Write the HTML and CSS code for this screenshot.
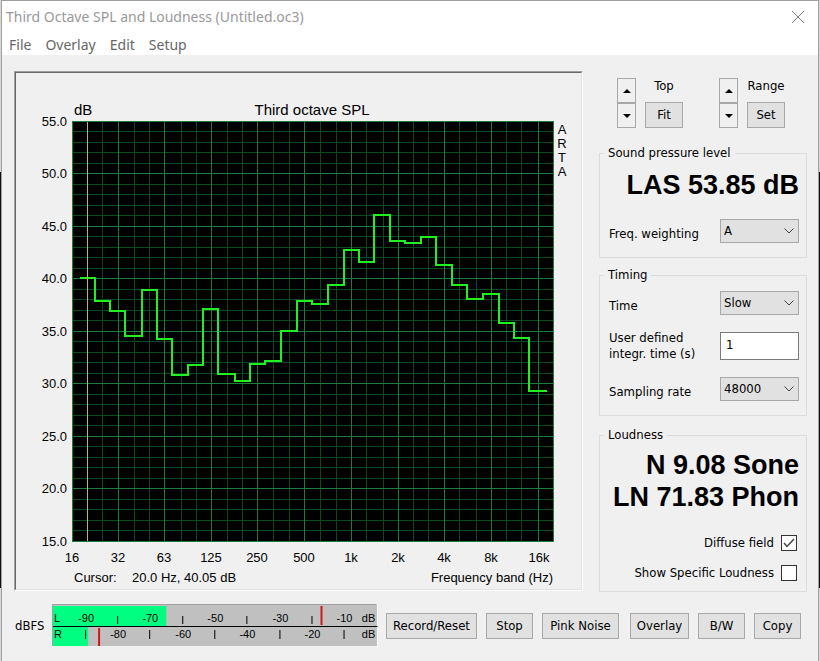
FILE: index.html
```
<!DOCTYPE html>
<html lang="en">
<head>
<meta charset="utf-8">
<title>Third Octave SPL and Loudness (Untitled.oc3)</title>
<link rel="stylesheet" href="styles.css">
</head>
<body>
<div class="window">
  <header class="titlebar">
    <h1 class="title">Third Octave SPL and Loudness (Untitled.oc3)</h1>
    <button class="close" aria-label="Close">
      <svg width="14" height="14" viewBox="0 0 14 14"><path d="M1 1L13 13M13 1L1 13" fill="none" stroke="#808080"/></svg>
    </button>
  </header>
  <nav class="menu">
    <a href="#">File</a>
    <a href="#">Overlay</a>
    <a href="#">Edit</a>
    <a href="#">Setup</a>
  </nav>
  <main class="content">
    <section class="chart">
      <svg class="plot" viewBox="16 73 565 516">
        <rect x="72" y="121" width="482" height="421" fill="#000"/>
        <g class="grid" id="grid"></g>
        <path class="curve" d="M80 278H95V301H110V311H125V336H142V290H157V339H172V375H188V365H203V309H218V374H235V381H250V364H265V361H281V331H297V301H312V304H328V285H344V250H359V262H374V215H390V241H405V243H421V237H436V265H452V285H467V299H483V294H499V323H514V338H529V391H547"/>
        <path class="cursor" d="M87.500 122V541"/>
        <text class="heading" x="74" y="115">dB</text>
        <text class="heading middle" x="312" y="115">Third octave SPL</text>
        <g class="end">
          <text x="67" y="126">55.0</text>
          <text x="67" y="178">50.0</text>
          <text x="67" y="231">45.0</text>
          <text x="67" y="283">40.0</text>
          <text x="67" y="336">35.0</text>
          <text x="67" y="388">30.0</text>
          <text x="67" y="441">25.0</text>
          <text x="67" y="493">20.0</text>
          <text x="67" y="546">15.0</text>
        </g>
        <g class="middle">
          <text x="72" y="562">16</text>
          <text x="118" y="562">32</text>
          <text x="164" y="562">63</text>
          <text x="211" y="562">125</text>
          <text x="257" y="562">250</text>
          <text x="304" y="562">500</text>
          <text x="351" y="562">1k</text>
          <text x="398" y="562">2k</text>
          <text x="444" y="562">4k</text>
          <text x="491" y="562">8k</text>
          <text x="539" y="562">16k</text>
          <text x="562" y="134">A</text>
          <text x="562" y="148">R</text>
          <text x="562" y="162">T</text>
          <text x="562" y="176">A</text>
        </g>
        <text x="74" y="582">Cursor:</text>
        <text x="132" y="582">20.0 Hz, 40.05 dB</text>
        <text class="end" x="553" y="582">Frequency band (Hz)</text>
      </svg>
    </section>
    <aside class="side">
      <div class="scales">
        <div class="scale">
          <div class="spinner">
            <button aria-label="Top up"><svg width="8" height="4" viewBox="0 0 8 4"><path d="M0 4L4 0L8 4Z"/></svg></button>
            <button aria-label="Top down"><svg width="8" height="4" viewBox="0 0 8 4"><path d="M0 0L4 4L8 0Z"/></svg></button>
          </div>
          <div class="scale-set"><span>Top</span><button class="btn">Fit</button></div>
        </div>
        <div class="scale">
          <div class="spinner">
            <button aria-label="Range up"><svg width="8" height="4" viewBox="0 0 8 4"><path d="M0 4L4 0L8 4Z"/></svg></button>
            <button aria-label="Range down"><svg width="8" height="4" viewBox="0 0 8 4"><path d="M0 0L4 4L8 0Z"/></svg></button>
          </div>
          <div class="scale-set"><span>Range</span><button class="btn">Set</button></div>
        </div>
      </div>

      <fieldset class="group level">
        <legend>Sound pressure level</legend>
        <output class="reading">LAS 53.85 dB</output>
        <div class="row pick">
          <label for="weighting">Freq. weighting</label>
          <span class="drop"><select id="weighting"><option>A</option></select>
            <svg width="10" height="6" viewBox="0 0 10 6"><path d="M.5 .5L5 5L9.500 .5" fill="none" stroke="#444"/></svg></span>
        </div>
      </fieldset>

      <fieldset class="group timing">
        <legend>Timing</legend>
        <div class="row pick">
          <label for="time">Time</label>
          <span class="drop"><select id="time"><option>Slow</option></select>
            <svg width="10" height="6" viewBox="0 0 10 6"><path d="M.5 .5L5 5L9.500 .5" fill="none" stroke="#444"/></svg></span>
        </div>
        <div class="row">
          <label for="integr">User defined<br>integr. time (s)</label>
          <input id="integr" class="field" type="text" value="1">
        </div>
        <div class="row pick">
          <label for="rate">Sampling rate</label>
          <span class="drop"><select id="rate"><option>48000</option></select>
            <svg width="10" height="6" viewBox="0 0 10 6"><path d="M.5 .5L5 5L9.500 .5" fill="none" stroke="#444"/></svg></span>
        </div>
      </fieldset>

      <fieldset class="group loudness">
        <legend>Loudness</legend>
        <output class="reading">N 9.08 Sone</output>
        <output class="reading">LN 71.83 Phon</output>
        <div class="checks">
          <label class="check">Diffuse field
            <span class="tick"><input type="checkbox" checked>
              <svg width="12" height="10" viewBox="0 0 12 10"><path d="M1 5L4 8.500L11 1" fill="none" stroke="#444" stroke-width="1.500"/></svg></span></label>
          <label class="check">Show Specific Loudness
            <span class="tick"><input type="checkbox"></span></label>
        </div>
      </fieldset>
    </aside>
  </main>
  <footer class="bottom">
    <span>dBFS</span>
    <svg class="meter" viewBox="53 605 325 43">
      <rect x="53" y="605" width="325" height="43" fill="#fff"/>
      <rect x="53" y="605" width="324" height="42" fill="#a0a0a0"/>
      <rect x="54" y="606" width="323" height="41" fill="#c0c0c0"/>
      <rect x="54" y="607" width="113" height="20" fill="#00ff80"/>
      <rect x="54" y="628" width="35" height="19" fill="#00ff80"/>
      <path d="M54 627.500H378M118.500 617V625M183.500 617V625M247.500 617V625M312.500 617V625M86.500 631V640M150.500 631V640M215.500 631V640M280.500 631V640M344.500 631V640" stroke="#000"/>
      <path d="M322 607V626M100 629V647" stroke="#d01818" stroke-width="2"/>
      <g class="middle">
        <text x="58" y="623">L</text>
        <text x="87" y="623">-90</text>
        <text x="151" y="623">-70</text>
        <text x="216" y="623">-50</text>
        <text x="281" y="623">-30</text>
        <text x="345" y="623">-10</text>
        <text x="369" y="623">dB</text>
        <text x="59" y="639">R</text>
        <text x="119" y="639">-80</text>
        <text x="184" y="639">-60</text>
        <text x="248" y="639">-40</text>
        <text x="313" y="639">-20</text>
        <text x="369" y="639">dB</text>
      </g>
    </svg>
    <div class="actions">
      <div class="action-set">
        <button class="btn widest">Record/Reset</button>
        <button class="btn">Stop</button>
        <button class="btn wider">Pink Noise</button>
      </div>
      <div class="action-set">
        <button class="btn wide">Overlay</button>
        <button class="btn">B/W</button>
        <button class="btn">Copy</button>
      </div>
    </div>
  </footer>
</div>
<script src="grid.js"></script>
</body>
</html>
```

FILE: styles.css
```
* { box-sizing: border-box; }

body {
  margin: 0;
  min-height: 100vh;
  padding: 0 1px 0 1px;
  background: linear-gradient(#d8d8d8 172px, #101010 172px, #101010 588px, #d8d8d8 588px);
  color: #000;
  font: 13px/16px "DejaVu Sans Condensed", "Noto Sans", sans-serif;
}

button, input, select { font: inherit; color: inherit; }

.window {
  display: flex;
  flex-direction: column;
  min-height: 100vh;
  border: 1px solid #a0a0a0;
  border-bottom: 0;
  background: #f0f0f0;
}

.titlebar, .menu {
  display: flex;
  align-items: center;
  background: #fff;
  font: 14px/20px "Noto Sans", sans-serif;
}

.titlebar { height: 31px; padding: 0 13px 0 4px; justify-content: space-between; }
.title { margin: 0; font: inherit; color: #999; }
.close { display: flex; padding: 0; border: 0; background: none; }

.menu { height: 23px; padding: 2px 7px 0; gap: 14px; }
.menu a { color: #666; text-decoration: none; }

.content {
  display: grid;
  grid-template-columns: minmax(0, 1fr) 208px;
  gap: 16px;
  padding: 16px 11px 0 12px;
}

.chart {
  align-self: start;
  border: 1px solid;
  border-color: #a0a0a0 #fff #fff #a0a0a0;
}

.plot {
  display: block;
  width: 100%;
  border: 1px solid;
  border-color: #696969 #e3e3e3 #e3e3e3 #696969;
}

.plot text { font: 13px "Liberation Sans", sans-serif; }
.plot .heading { font-size: 15px; }
.middle { text-anchor: middle; }
.end { text-anchor: end; }
.grid .minor { stroke: #0b4a20; }
.grid .major { stroke: #1c7c38; }
.plot .cursor { stroke: #c8b840; }
.curve { fill: none; stroke: #20f020; stroke-width: 2; }

.side { display: flex; flex-direction: column; }

.scales { display: flex; gap: 36px; padding: 7px 0 0 18px; }
.scale { display: flex; gap: 9px; }
.scale-set { display: flex; flex-direction: column; justify-content: space-between; align-items: center; width: 38px; }
.scale-set .btn { width: 100%; }

.spinner { display: flex; flex-direction: column; width: 19px; }
.spinner button {
  display: flex;
  align-items: center;
  justify-content: center;
  height: 25px;
  padding: 0;
  border: 1px solid #a8a8a8;
  background: #f0f0f0;
}

.btn {
  width: 47px;
  height: 26px;
  padding: 0;
  border: 1px solid #a8a8a8;
  background: #e1e1e1;
  white-space: nowrap;
}
.btn.wide { width: 59px; }
.btn.wider { width: 77px; }
.btn.widest { width: 91px; }

.group {
  min-width: 0;
  margin: 0;
  padding: 0 7px 0 9px;
  border: 1px solid #dcdcdc;
}
.group legend { margin-left: -5px; padding: 0 4px; }

.level { height: 113px; margin-top: 17px; padding-top: 8px; }
.timing { height: 149px; margin-top: 9px; padding-top: 6px; }
.loudness { height: 165px; margin-top: 11px; padding-top: 6px; }

.reading {
  display: block;
  font: bold 27px/32px "Liberation Sans", sans-serif;
  text-align: right;
  white-space: nowrap;
}

.row { display: flex; justify-content: space-between; align-items: center; height: 28px; }
.level .row { margin-top: 16px; }
.timing .row { margin-bottom: 15px; }
.pick label { padding-top: 6px; }

.drop { position: relative; width: 79px; }
.drop select {
  display: block;
  width: 100%;
  height: 24px;
  padding: 0 3px;
  border: 1px solid #a8a8a8;
  border-radius: 0;
  background: #e1e1e1;
  appearance: none;
}
.drop svg { position: absolute; top: 9px; right: 5px; pointer-events: none; }

.field {
  width: 79px;
  height: 28px;
  padding: 0 5px 4px;
  border: 1px solid #7a7a7a;
  background: #fff;
}

.checks { display: flex; flex-direction: column; gap: 14px; margin-top: 22px; padding-right: 2px; }
.check { display: flex; justify-content: flex-end; gap: 7px; white-space: nowrap; }
.tick { position: relative; display: flex; }
.tick input {
  width: 16px;
  height: 16px;
  margin: 0;
  border: 1px solid #333;
  background: #fff;
  appearance: none;
}
.tick svg { position: absolute; top: 3px; left: 2px; pointer-events: none; }

.bottom {
  display: flex;
  align-items: center;
  gap: 8px;
  padding: 12px 17px 12px 13px;
}
.meter { flex: 1; min-width: 0; }
.meter text { font: 11px "Liberation Sans", sans-serif; }
.actions { display: flex; gap: 11px; }
.action-set { display: flex; gap: 9px; }
```

FILE: grid.js
```
// Third-octave columns and 1 dB rows of the plot grid.
const columns = [72, 87, 102, 118, 134, 149, 164, 181, 196, 211, 227, 242, 257, 273, 289, 304,
  320, 336, 351, 366, 383, 398, 413, 428, 444, 459, 476, 491, 506, 521, 538];
let minor = '';
let major = 'M553.5 121V542';
columns.forEach((x, i) => {
  const line = `M${x + 0.5} 121V542`;
  if (i % 3) minor += line; else major += line;
});
for (let k = 0; k <= 40; k++) {
  const line = `M72 ${Math.floor(121.4 + 10.5 * k) + 0.5}H554`;
  if (k % 5) minor += line; else major += line;
}
document.getElementById('grid').innerHTML =
  `<path class="minor" d="${minor}"/><path class="major" d="${major}"/>`;
```
